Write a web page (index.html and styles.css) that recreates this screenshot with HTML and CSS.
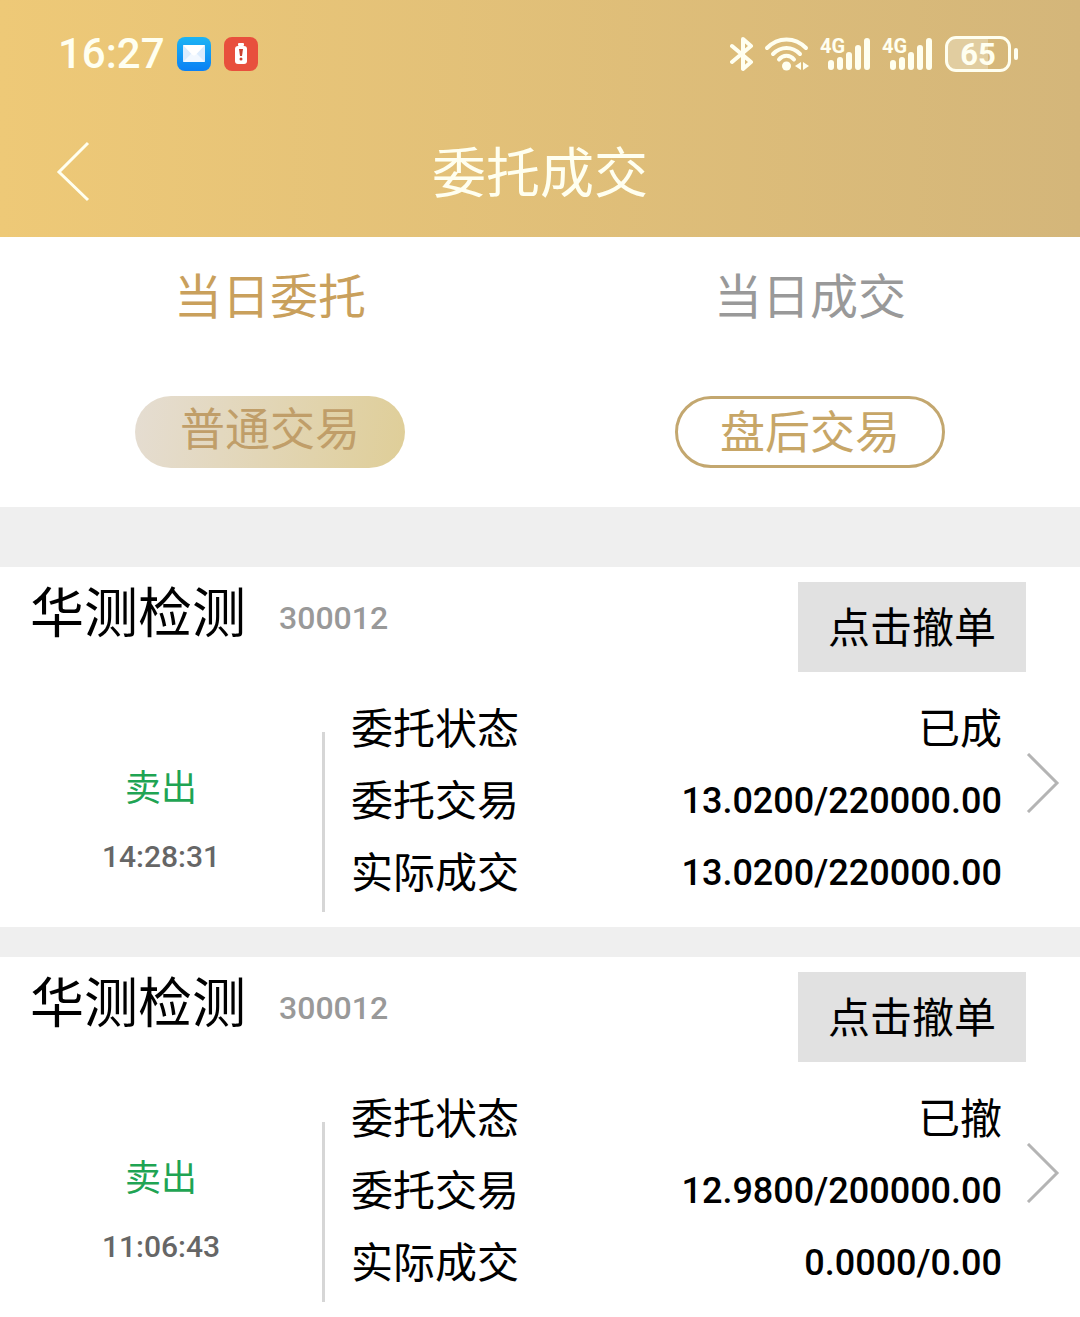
FILE: index.html
```
<!DOCTYPE html>
<html lang="zh-CN">
<head>
    <meta charset="UTF-8">
    <meta name="viewport" content="width=device-width, initial-scale=1.0">
    <title>委托成交</title>
    <link rel="stylesheet" href="styles.css">
</head>
<body>
    <header class="header">
        <div class="status-bar">
            <span class="clock">16:27</span>
            <svg class="app-icon" width="34" height="34" viewBox="0 0 34 34">
                <defs>
                    <linearGradient id="mailBg" x1="0" y1="0" x2="0" y2="1">
                        <stop offset="0" stop-color="#1cb4f4"/>
                        <stop offset="1" stop-color="#0a80f4"/>
                    </linearGradient>
                </defs>
                <rect width="34" height="34" rx="8" fill="url(#mailBg)"/>
                <rect x="6" y="8" width="22" height="17" rx="1" fill="#dcecfd"/>
                <path d="M6 25l8-8h6l8 8z" fill="#f2f8ff"/>
                <path d="M6 8h22l-9 9.500q-2 2-4 0z" fill="#fff"/>
            </svg>
            <svg class="app-icon alert-icon" width="34" height="34" viewBox="0 0 34 34">
                <rect width="34" height="34" rx="8" fill="#e84f3d"/>
                <rect x="14" y="6" width="6" height="3" rx="1" fill="#fff"/>
                <rect x="11" y="9" width="12" height="18" rx="3" fill="#fff"/>
                <path d="M15 12h4l-1 7h-2z" fill="#c9402f"/>
                <circle cx="17" cy="22" r="1.500" fill="#c9402f"/>
            </svg>
            <div class="status-right">
                <svg width="24" height="36" viewBox="0 0 24 36" fill="none" stroke="#fffff0" stroke-width="4" stroke-linecap="round" stroke-linejoin="round">
                    <path d="M2 10l19 16-8 7V3l8 7L2 26"/>
                </svg>
                <svg class="wifi" width="46" height="36" viewBox="0 0 46 36" fill="none" stroke="#fffff0" stroke-width="4" stroke-linecap="round">
                    <path d="M3 12C14 .500 31 .500 42 12"/>
                    <path d="M9 18c8-8 19-8 27 0"/>
                    <path d="M15 23.500c4-5 11-5 15 0"/>
                    <circle cx="22.500" cy="30" r="4.500" fill="#fffff0" stroke="none"/>
                    <path d="M37 26v8l-6-4zM39 26l6 4-6 4z" fill="#fffff0" stroke="none"/>
                </svg>
                <div class="signal">
                    <span class="signal-type">4G</span>
                    <svg width="52" height="36" viewBox="0 0 52 36" stroke="#fffff0" stroke-width="6" stroke-linecap="round">
                        <path d="M11 27v4M20 24v7M29 19v12M38 12v19M47 5v26"/>
                    </svg>
                </div>
                <div class="signal">
                    <span class="signal-type">4G</span>
                    <svg width="52" height="36" viewBox="0 0 52 36" stroke="#fffff0" stroke-width="6" stroke-linecap="round">
                        <path d="M11 27v4M20 24v7M29 19v12M38 12v19M47 5v26"/>
                    </svg>
                </div>
                <div class="battery">65</div>
            </div>
        </div>
        <nav class="nav">
            <button class="back" type="button" aria-label="返回">
                <svg width="36" height="62" viewBox="0 0 36 62" fill="none" stroke="#fffff0" stroke-width="3">
                    <path d="M34 2L5 31l29 28"/>
                </svg>
            </button>
            <h1 class="title">委托成交</h1>
        </nav>
    </header>

    <div class="tabs">
        <button class="tab active" type="button">当日委托</button>
        <button class="tab" type="button">当日成交</button>
    </div>

    <div class="filters">
        <div class="filter-cell"><button class="pill active" type="button">普通交易</button></div>
        <div class="filter-cell"><button class="pill" type="button">盘后交易</button></div>
    </div>

    <main class="orders">
        <section class="order">
            <div class="order-head">
                <h2 class="stock-name">华测检测</h2>
                <span class="stock-code">300012</span>
                <button class="cancel-btn" type="button">点击撤单</button>
            </div>
            <div class="order-body">
                <div class="side">
                    <div class="direction">卖出</div>
                    <div class="time">14:28:31</div>
                </div>
                <dl class="details">
                    <div class="row"><dt>委托状态</dt><dd>已成</dd></div>
                    <div class="row"><dt>委托交易</dt><dd class="num">13.0200/220000.00</dd></div>
                    <div class="row"><dt>实际成交</dt><dd class="num">13.0200/220000.00</dd></div>
                </dl>
                <a class="more" href="#" aria-label="详情">
                    <svg width="34" height="60" viewBox="0 0 34 60" fill="none" stroke="#b4b4b4" stroke-width="3">
                        <path d="M2 1l29 29L2 59"/>
                    </svg>
                </a>
            </div>
        </section>

        <section class="order">
            <div class="order-head">
                <h2 class="stock-name">华测检测</h2>
                <span class="stock-code">300012</span>
                <button class="cancel-btn" type="button">点击撤单</button>
            </div>
            <div class="order-body">
                <div class="side">
                    <div class="direction">卖出</div>
                    <div class="time">11:06:43</div>
                </div>
                <dl class="details">
                    <div class="row"><dt>委托状态</dt><dd>已撤</dd></div>
                    <div class="row"><dt>委托交易</dt><dd class="num">12.9800/200000.00</dd></div>
                    <div class="row"><dt>实际成交</dt><dd class="num">0.0000/0.00</dd></div>
                </dl>
                <a class="more" href="#" aria-label="详情">
                    <svg width="34" height="60" viewBox="0 0 34 60" fill="none" stroke="#b4b4b4" stroke-width="3">
                        <path d="M2 1l29 29L2 59"/>
                    </svg>
                </a>
            </div>
        </section>
    </main>
</body>
</html>
```
FILE: styles.css
```
* {
    box-sizing: border-box;
}

body {
    margin: 0;
    background: #fff;
    color: #000;
    font-family: "Noto Sans CJK SC", sans-serif;
    font-size: 42px;
}

button {
    margin: 0;
    padding: 0;
    border: none;
    background: none;
    font-family: inherit;
    cursor: pointer;
}

svg {
    display: block;
    flex-shrink: 0;
}

/* header */
.header {
    background: linear-gradient(90deg, #eec977, #d4b67a);
    color: #fffff0;
}

.status-bar {
    display: flex;
    align-items: center;
    height: 107px;
    padding: 0 69px 0 58px;
    font-family: Roboto, sans-serif;
}

.clock {
    font-size: 42px;
    font-weight: 500;
    line-height: 48px;
}

.app-icon {
    margin-left: 12px;
}

.alert-icon {
    margin-left: 13px;
}

.status-right {
    display: flex;
    align-items: center;
    margin-left: auto;
}

.wifi {
    margin-left: 10px;
}

.signal {
    position: relative;
    margin-left: 10px;
}

.signal-type {
    position: absolute;
    top: 0;
    left: 0;
    font-size: 20px;
    font-weight: bold;
    line-height: 20px;
}

.battery {
    position: relative;
    width: 66px;
    height: 36px;
    margin-left: 11px;
    border: 3px solid #fffff0;
    border-radius: 11px;
    background: linear-gradient(90deg, #e1cda0 66%, transparent 66%);
    font-size: 31px;
    font-weight: bold;
    line-height: 31px;
    text-align: center;
}

.battery::after {
    content: "";
    position: absolute;
    top: 9px;
    right: -10px;
    width: 4px;
    height: 12px;
    border-radius: 2px;
    background: #fffff0;
}

.nav {
    display: grid;
    grid-template-columns: 90px 1fr 90px;
    align-items: center;
    height: 130px;
}

.back {
    display: flex;
    justify-content: flex-end;
    color: inherit;
}

.title {
    margin: 0;
    padding-bottom: 4px;
    font-size: 54px;
    font-weight: normal;
    line-height: 72px;
    text-align: center;
}

/* tabs */
.tabs,
.filters {
    display: grid;
    grid-template-columns: 1fr 1fr;
}

.tab {
    height: 117px;
    padding-bottom: 6px;
    color: #999;
    font-size: 48px;
    line-height: 72px;
}

.tab.active {
    color: #c9a05c;
}

.filter-cell {
    display: flex;
    justify-content: center;
    padding: 42px 0 39px;
}

.pill {
    width: 270px;
    height: 72px;
    padding-bottom: 4px;
    border: 3px solid #c3a76f;
    border-radius: 36px;
    color: #c7a667;
    font-size: 45px;
    line-height: 60px;
}

.pill.active {
    padding-bottom: 10px;
    border: none;
    background: linear-gradient(100deg, #e5ddd2, #dfce98);
    color: #c09e69;
}

/* orders */
.orders {
    display: flex;
    flex-direction: column;
    gap: 30px;
    padding-top: 60px;
    background: #efefef;
}

.order {
    padding: 15px 20px 15px 0;
    background: #fff;
}

.order-head {
    display: flex;
    align-items: flex-start;
    height: 111px;
    padding: 0 34px 0 30px;
}

.stock-name {
    margin: 0;
    font-size: 54px;
    font-weight: normal;
    line-height: 56px;
}

.stock-code {
    margin-left: 33px;
    color: #999;
    font-family: Roboto, sans-serif;
    font-size: 32px;
    font-weight: 500;
    line-height: 72px;
}

.cancel-btn {
    width: 228px;
    height: 90px;
    margin-left: auto;
    padding-bottom: 4px;
    background: #e1e1e1;
    color: #000;
    font-size: 42px;
    line-height: 72px;
}

.order-body {
    display: flex;
    align-items: flex-start;
}

.side {
    width: 325px;
    height: 180px;
    margin-top: 39px;
    padding-top: 17px;
    border-right: 3px solid #d6d6d6;
    line-height: 72px;
    text-align: center;
}

.direction {
    color: #1fa453;
    font-size: 36px;
}

.time {
    color: #666;
    font-family: Roboto, sans-serif;
    font-size: 30px;
    font-weight: 500;
}

.details {
    flex: 1;
    margin: 0;
    padding: 0 24px 0 26px;
}

.row {
    display: flex;
    justify-content: space-between;
    height: 72px;
    line-height: 66px;
}

.row dd {
    margin: 0;
}

.row .num {
    font-family: Roboto, sans-serif;
    font-size: 36px;
    font-weight: 500;
    line-height: 72px;
}

.more {
    margin-top: 60px;
}
```
